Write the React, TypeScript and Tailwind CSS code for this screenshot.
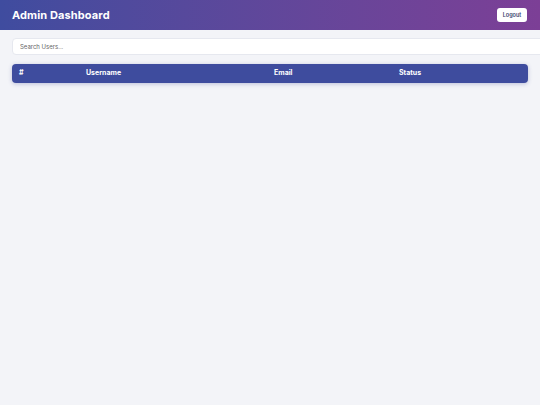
export default function App() {
  return (
    <div className="min-h-[405px] w-full overflow-hidden bg-[#f3f4f8]" style={{ fontFamily: 'Inter, "DejaVu Sans", sans-serif' }}>
      <header className="flex h-[30px] items-center justify-between bg-gradient-to-r from-[#3f4c9f] to-[#7c3f96] pl-3 pr-[13px]">
        <h1 className="text-[11px] font-bold tracking-[0.01em] text-white">Admin Dashboard</h1>
        <button className="flex h-[14px] w-[30px] items-center justify-center rounded-[3px] bg-white text-[5.5px] font-semibold text-[#3b3f6e]">
          Logout
        </button>
      </header>

      <div className="pl-3 pt-2">
        <input
          placeholder="Search Users..."
          className="block h-[17px] w-[540px] rounded-[4px] border border-[#e6e8ef] bg-white px-[7px] text-[6px] text-[#555] placeholder:text-[#666] outline-none"
        />
      </div>

      <div className="mx-3 mt-[9px]">
        <div className="grid h-[19px] grid-cols-[67px_188px_125px_1fr] items-center rounded-[4px] bg-[#3e4c9e] pl-[7px] text-[7px] font-bold text-white shadow-[0_1px_4px_rgba(60,70,150,0.3)]">
          <span>#</span>
          <span>Username</span>
          <span>Email</span>
          <span>Status</span>
        </div>
      </div>
    </div>
  );
}
